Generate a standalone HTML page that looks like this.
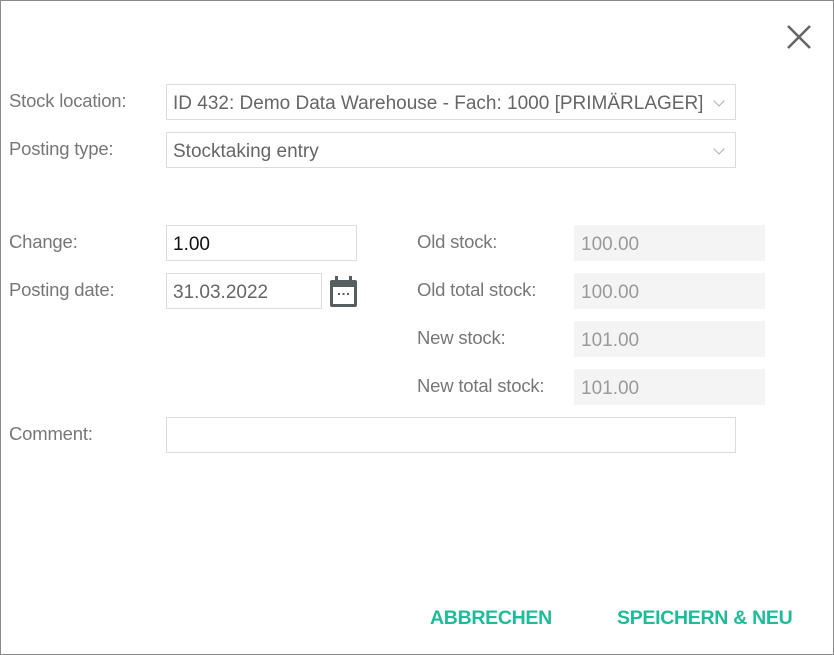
<!DOCTYPE html>
<html><head><style>
html,body{margin:0;padding:0;}
body{width:834px;height:655px;position:relative;background:#fff;font-family:"Liberation Sans",sans-serif;overflow:hidden;}
.frame{position:absolute;left:0;top:0;width:832px;height:653px;border:1px solid #8a8a8a;}
.lbl{position:absolute;left:9px;color:#777;font-size:18.5px;letter-spacing:-0.2px;}
.box{position:absolute;border:1px solid #dcdcdc;box-sizing:border-box;font-size:19px;color:#666;padding-left:6px;line-height:37px;height:36px;white-space:nowrap;overflow:hidden;}
.ro{background:#f4f4f4;border-color:#f4f4f4;color:#9a9a9a;}
.chev{position:absolute;right:12px;top:12px;width:7px;height:7px;border-right:1px solid #aaa;border-bottom:1px solid #aaa;transform:rotate(45deg);background:#fff;box-shadow:0 0 0 6px #fff;}
.btn{position:absolute;top:607px;color:#1ebc98;font-weight:bold;font-size:19.5px;letter-spacing:-0.3px;}
</style></head><body>
<div class="frame"></div>
<svg style="position:absolute;left:786px;top:24px" width="26" height="26" viewBox="0 0 26 26"><path d="M2 2L24 24M24 2L2 24" stroke="#666" stroke-width="2.6"/></svg>

<div class="lbl" style="top:90px">Stock location:</div>
<div class="box" style="left:166px;top:84px;width:570px;padding-right:36px">ID 432: Demo Data Warehouse - Fach: 1000 [PRIMÄRLAGER]<span class="chev"></span></div>
<div class="lbl" style="top:138px">Posting type:</div>
<div class="box" style="left:166px;top:132px;width:570px">Stocktaking entry<span class="chev"></span></div>

<div class="lbl" style="top:231px">Change:</div>
<div class="box" style="left:166px;top:225px;width:191px;color:#111">1.00</div>
<div class="lbl" style="top:279px">Posting date:</div>
<div class="box" style="left:166px;top:273px;width:156px">31.03.2022</div>
<svg style="position:absolute;left:330px;top:276px" width="27" height="31" viewBox="0 0 27 31"><rect x="0" y="4" width="27" height="27" rx="2" fill="#555f5f"/><rect x="3" y="11" width="21" height="17" fill="#fff"/><rect x="5" y="0" width="3" height="6" fill="#555f5f"/><rect x="19" y="0" width="3" height="6" fill="#555f5f"/><rect x="8" y="17" width="2" height="2" fill="#555f5f"/><rect x="12.5" y="17" width="2" height="2" fill="#555f5f"/><rect x="17" y="17" width="2" height="2" fill="#555f5f"/></svg>

<div class="lbl" style="left:417px;top:231px">Old stock:</div>
<div class="box ro" style="left:574px;top:225px;width:191px">100.00</div>
<div class="lbl" style="left:417px;top:279px">Old total stock:</div>
<div class="box ro" style="left:574px;top:273px;width:191px">100.00</div>
<div class="lbl" style="left:417px;top:327px">New stock:</div>
<div class="box ro" style="left:574px;top:321px;width:191px">101.00</div>
<div class="lbl" style="left:417px;top:375px">New total stock:</div>
<div class="box ro" style="left:574px;top:369px;width:191px">101.00</div>

<div class="lbl" style="top:423px">Comment:</div>
<div class="box" style="left:166px;top:417px;width:570px"></div>

<div class="btn" style="left:430px">ABBRECHEN</div>
<div class="btn" style="left:617px">SPEICHERN &amp; NEU</div>
</body></html>
